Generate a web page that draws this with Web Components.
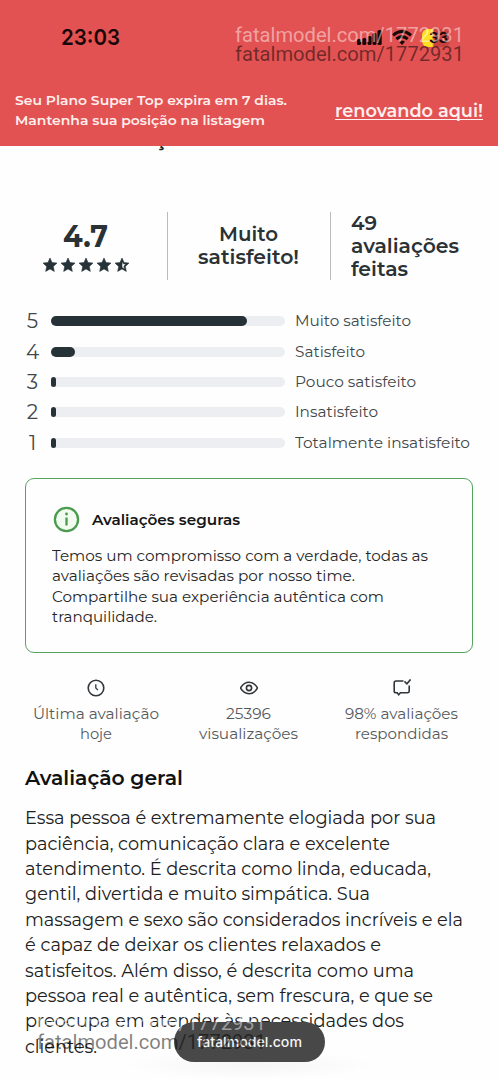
<!DOCTYPE html>
<html lang="pt-BR">
<head>
<meta charset="utf-8">
<title>Avaliações</title>
<style>
body{margin:0;background:#fefefe;font-family:Montserrat,Inter,"Liberation Sans",sans-serif}
</style>
</head>
<body>
<review-page></review-page>
<script>
const define=(name,html,setup)=>{
  const t=document.createElement('template');t.innerHTML=html;
  customElements.define(name,class extends HTMLElement{
    connectedCallback(){
      if(this.shadowRoot)return;
      this.attachShadow({mode:'open'}).append(document.importNode(t.content,true));
      if(setup)setup(this,this.shadowRoot);
    }
  });
};

define('review-page',`<style>
:host{display:block;position:relative;width:498px;height:1080px;overflow:hidden;color:#2a3236}
.summary{display:grid;grid-template-columns:167px 163px 1fr;height:68px;margin-top:66px;align-items:center;font-size:20px;font-weight:600;line-height:23px}
.summary>div{height:68px;display:flex;flex-direction:column;justify-content:center;align-items:center;box-sizing:border-box}
.summary>div+div{border-left:1px solid #b9bcbe}
.score{padding-left:4px}
.summary>.mid{padding-right:1px}
.summary>.count{align-items:flex-start;padding-left:20px}
.score fit-line{font-size:30px;line-height:32px;font-weight:700;margin-left:-1px}
.bars{margin-top:26px}
secure-card{margin:20px 25px 0}
.stats{display:grid;grid-template-columns:142px 163px 143px;padding:0 25px;margin-top:26.500px}
h2{margin:22px 0 0 25px;font-size:20.3px;line-height:24px;font-weight:600;color:#111}
.text{padding:15px 0 0 25px;font-size:17.7px;line-height:25.35px;color:#202020}
.glow{position:absolute;left:120px;top:1050px;width:260px;height:30px;background:radial-gradient(#00000009,#0000 70%)}
.wm{position:absolute;left:0;font:400 20px/24px Roboto,sans-serif}
</style>
<top-banner></top-banner>
<section class="summary">
<div class="score"><fit-line w="45">4.7</fit-line><star-row></star-row></div>
<div class="mid"><fit-line w="59">Muito</fit-line><fit-line w="101">satisfeito!</fit-line></div>
<div class="count"><fit-line w="26">49</fit-line><fit-line w="108">avaliações</fit-line><fit-line w="57">feitas</fit-line></div>
</section>
<section class="bars">
<rating-bar n="5" fill="196"><fit-line w="116">Muito satisfeito</fit-line></rating-bar>
<rating-bar n="4" fill="24.5"><fit-line w="70">Satisfeito</fit-line></rating-bar>
<rating-bar n="3" fill="5"><fit-line w="121">Pouco satisfeito</fit-line></rating-bar>
<rating-bar n="2" fill="5"><fit-line w="83">Insatisfeito</fit-line></rating-bar>
<rating-bar n="1" fill="5"><fit-line w="175">Totalmente insatisfeito</fit-line></rating-bar>
</section>
<secure-card></secure-card>
<section class="stats">
<stat-item><svg slot="icon" viewBox="0 0 18 18"><circle cx="9" cy="9" r="7.8"/><path d="M8.800 5.300V9l2.200 2.100" stroke-width="1.300"/></svg><fit-line w="126">Última avaliação</fit-line><fit-line w="32">hoje</fit-line></stat-item>
<stat-item><svg slot="icon" viewBox="0 0 18 18"><path d="M.4 9C2.8 5 5.5 3.2 9 3.2S15.2 5 17.6 9C15.2 13 12.500 14.800 9 14.800S2.800 13 .4 9Z"/><circle cx="9" cy="9" r="2.6"/></svg><fit-line w="45">25396</fit-line><fit-line w="99">visualizações</fit-line></stat-item>
<stat-item><svg slot="icon" viewBox="0 0 18 18"><path d="M10.500 2H3Q1.200 2 1.200 3.700v8.500Q1.200 13.800 3 13.800h1.200l1.500 2 1.700-2h7.100q1.700 0 1.700-1.600V6.500M11.500 2.400l2.400 2.400 3.700-4.400"/></svg><fit-line w="113">98% avaliações</fit-line><fit-line w="93">respondidas</fit-line></stat-item>
</section>
<h2><fit-line w="158">Avaliação geral</fit-line></h2>
<section class="text">
<fit-line w="411">Essa pessoa é extremamente elogiada por sua</fit-line>
<fit-line w="365">paciência, comunicação clara e excelente</fit-line>
<fit-line w="406">atendimento. É descrita como linda, educada,</fit-line>
<fit-line w="345">gentil, divertida e muito simpática. Sua</fit-line>
<fit-line w="438">massagem e sexo são considerados incríveis e ela</fit-line>
<fit-line w="356">é capaz de deixar os clientes relaxados e</fit-line>
<fit-line w="389">satisfeitos. Além disso, é descrita como uma</fit-line>
<fit-line w="408">pessoa real e autêntica, sem frescura, e que se</fit-line>
<fit-line w="379">preocupa em atender às necessidades dos</fit-line>
<fit-line w="72">clientes.</fit-line>
</section>
<div class="glow"></div>
<url-pill></url-pill>
<fit-line class="wm" w="229" style="left:235px;top:23px;color:#ffffff78">fatalmodel.com/1772931</fit-line>
<fit-line class="wm" w="229" style="left:235px;top:42px;color:#00000080">fatalmodel.com/1772931</fit-line>
<fit-line class="wm" w="229" style="left:37px;top:1011px;color:#ffffff78">fatalmodel.com/1772931</fit-line>
<fit-line class="wm" w="229" style="left:37px;top:1030px;color:#00000080">fatalmodel.com/1772931</fit-line>`);

define('top-banner',`<style>
:host{display:block;position:relative;height:146px;box-sizing:border-box;background:#e35252;color:#ffefed}
.status{height:90px;box-sizing:border-box;padding:25px 47px 0 61px;display:flex;justify-content:space-between;color:#190708;font:600 22px/25px Inter,sans-serif}
.icons{display:flex;align-items:center;height:25px}
.bat{width:28px;height:18px;border-radius:6px;background:linear-gradient(90deg,#ffdf24 0 36%,#c9423f 44%);margin:0 1px 0 10px;font-size:14.500px;line-height:18px;font-weight:700;display:flex;justify-content:center}
.bat fit-line{margin-left:4px}
.note{display:flex;justify-content:space-between;align-items:center;padding:0 15px;font-size:13.500px;line-height:20.300px;font-weight:600}
.link{font-size:18px;line-height:24px;font-weight:600;position:relative;top:.500px}
.link::after{content:"";position:absolute;left:0;right:0;top:20px;height:1.200px;background:#ffefed}
.tail{position:absolute;left:155.500px;top:126.500px;color:#222;font-size:20px;font-weight:700;line-height:24px}
</style>
<div class="status"><fit-line w="59">23:03</fit-line>
<div class="icons"><svg width="25" height="17" viewBox="0 0 25 17" fill="#190708"><rect y="10" width="4" height="6" rx="1.5"/><rect x="5.300" y="9" width="4" height="7" rx="1.5"/><rect x="10.600" y="7" width="4" height="9" rx="1.5"/><rect x="15.500" y="4" width="4" height="12" rx="1.5"/><rect x="20.500" y="1" width="4.200" height="15" rx="1.5"/></svg>
<svg style="margin-left:10px" width="20" height="16" viewBox="0 0 20 16" fill="none" stroke="#190708" stroke-width="3"><path d="M1 5.300Q10-2.200 19 5.300M4.300 9Q10 4.300 15.700 9"/><path d="M7 11.700Q10 9.400 13 11.700L10 15Z" fill="#190708" stroke="none"/></svg>
<div class="bat"><fit-line w="19">33</fit-line></div></div></div>
<div class="note"><div><fit-line w="272">Seu Plano Super Top expira em 7 dias.</fit-line><fit-line w="250">Mantenha sua posição na listagem</fit-line></div>
<div class="link"><fit-line w="148">renovando aqui!</fit-line></div></div>
<div class="tail">¸</div>`);

define('star-row',`<style>:host{display:block;height:14px;margin-top:5px}svg{display:block}</style>
<svg width="86" height="14" viewBox="0 0 86 14" fill="#263238"></svg>`,(h,r)=>{
  const s='M7 0L9 4.600 14 5.100 10.300 8.500 11.300 13.400 7 10.900 2.700 13.400 3.700 8.500 0 5.100 5 4.600Z';
  let m='';
  for(let i=0;i<5;i++)m+=`<path stroke="#263238" stroke-width=".6" stroke-linejoin="round" transform="translate(${i*18})" d="${i<4?s:s+'M7 3.400V9.400L9.600 10.900 8.900 8.100 11 6.100 8.300 5.800Z'}" fill-rule="evenodd"/>`;
  r.querySelector('svg').innerHTML=m;
});

define('rating-bar',`<style>
:host{display:flex;align-items:center;height:30.400px;font-size:15px;line-height:20px;color:#41474a}
b{width:21px;margin-left:22px;text-align:center;font-size:20px;font-weight:400;line-height:24px}
.track{width:234.500px;height:10px;border-radius:5px;background:#eceef1;margin:0 10px 0 7.500px}
i{display:block;height:10px;border-radius:5px;background:#263238}
</style><b></b><div class="track"><i></i></div><slot></slot>`,(h,r)=>{
  r.querySelector('b').textContent=h.getAttribute('n');
  const i=r.querySelector('i'),f=+h.getAttribute('fill');
  i.style.width=f+'px';if(f<10)i.style.borderRadius='2.5px';
});

define('secure-card',`<style>
:host{display:block;height:175px;box-sizing:border-box;border:1.500px solid #56a35f;border-radius:9px;padding:27px 26px;color:#262626;font-size:15px;line-height:20.200px}
.head{display:flex;align-items:center;gap:12px;height:28px;margin-bottom:12.200px;font-weight:600;color:#151515}
svg{margin-left:1px}
</style>
<div class="head"><svg width="27" height="27" viewBox="0 0 27 27"><circle cx="13.500" cy="13.500" r="11.600" fill="#f1fbef" stroke="#4a9b4e" stroke-width="2.300"/><path d="M13.500 11.500v8" stroke="#4a9b4e" stroke-width="2.300"/><circle cx="13.500" cy="8" r="1.400" fill="#4a9b4e"/></svg><fit-line w="148">Avaliações seguras</fit-line></div>
<fit-line w="376">Temos um compromisso com a verdade, todas as</fit-line>
<fit-line w="303">avaliações são revisadas por nosso time.</fit-line>
<fit-line w="332">Compartilhe sua experiência autêntica com</fit-line>
<fit-line w="105">tranquilidade.</fit-line>`);

define('stat-item',`<style>
:host{display:flex;flex-direction:column;align-items:center;font-size:15px;line-height:20px;color:#555a5d}
::slotted(svg){width:18px;height:18px;fill:none;stroke:#30363a;stroke-width:1.600;margin-bottom:7px}
</style><slot name="icon"></slot><slot></slot>`);

define('url-pill',`<style>
:host{position:absolute;left:174px;top:1022px;width:151px;height:40px;border-radius:20px;background:#484848;color:#f4f4f4;display:flex;align-items:center;justify-content:center;font:500 13.500px/20px Inter,sans-serif}
</style><fit-line w="105">fatalmodel.com</fit-line>`);

/* A single line of text, stretched evenly to the width given in "w". */
define('fit-line',`<style>
:host{display:block;white-space:nowrap}
span{display:inline-block;transform-origin:0 50%;vertical-align:top}
</style><span><slot></slot></span>`,(h,r)=>{
  const w=+h.getAttribute('w'),s=r.querySelector('span');
  h.style.width=w+'px';
  s.style.transform=`scaleX(${w/s.getBoundingClientRect().width})`;
});
</script>
</body>
</html>
